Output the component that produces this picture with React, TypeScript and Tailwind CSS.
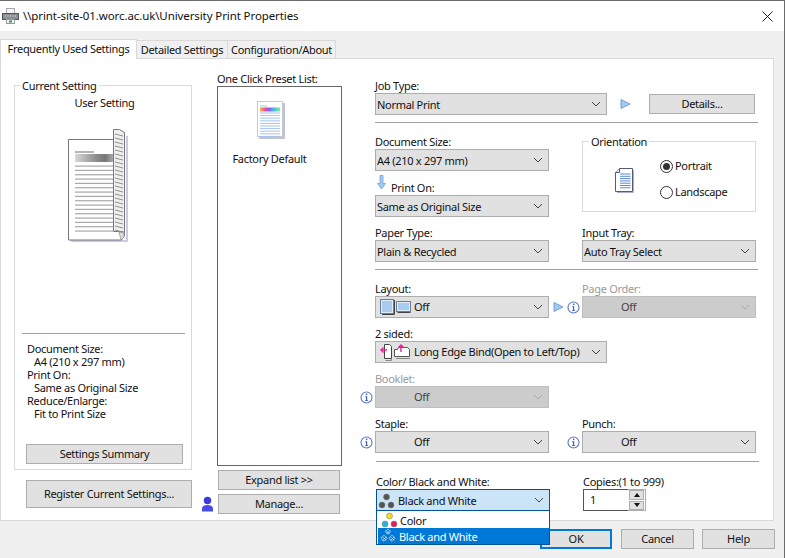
import React from 'react';

const Chevron = ({ muted }: { muted?: boolean }) => (
  <svg width="10" height="6" viewBox="0 0 10 6" className="shrink-0">
    <path d="M1 1l4 4 4-4" fill="none" stroke={muted ? '#a9a9a9' : '#444'} strokeWidth="1" />
  </svg>
);

const InfoIcon = () => (
  <svg width="13" height="13" viewBox="0 0 13 13" className="shrink-0">
    <circle cx="6.5" cy="6.5" r="5.5" fill="#fff" stroke="#5a78c8" strokeWidth="1.1" />
    <rect x="5.9" y="2.6" width="1.4" height="1.5" fill="#3f5fb8" />
    <path d="M5.2 5.3h2v3.9h1v.9H5v-.9h1V6.2h-.8z" fill="#3f5fb8" />
  </svg>
);

const BlueArrow = () => (
  <svg width="11" height="10" viewBox="0 0 11 10" className="shrink-0">
    <path d="M1 .5l9 4.500-9 4.500z" fill="#a5c8ee" stroke="#6ea2dc" strokeWidth="1" />
  </svg>
);

const LayoutIcon = () => (
  <svg width="31" height="16" viewBox="0 0 31 16" className="shrink-0">
    <rect x=".5" y=".5" width="13" height="14" fill="#a9cbee" stroke="#6c7c98" />
    <rect x="1.500" y="1.500" width="11" height="12" fill="none" stroke="#dcebf8" />
    <path d="M14.500 1v14.500H2" fill="none" stroke="#444" />
    <rect x="16.500" y="2.500" width="14" height="10" fill="#a9cbee" stroke="#6c7c98" />
    <rect x="17.500" y="3.500" width="12" height="8" fill="none" stroke="#dcebf8" />
    <path d="M17.500 13.500h13" stroke="#444" />
  </svg>
);

const TwoSidedIcon = () => (
  <svg width="31" height="18" viewBox="0 0 31 18" className="shrink-0">
    <path d="M4.500 1.500h5l2 2v12h-7z" fill="#fff" stroke="#444" />
    <path d="M11.500 15.500v2h-6" fill="none" stroke="#888" />
    <path d="M1 7h6M3.500 4.500L1 7l2.500 2.500" fill="none" stroke="#e6249a" strokeWidth="1.4" />
    <path d="M14.500 6.500h3l1-2h9l2 2v7h-15z" fill="#fff" stroke="#555" />
    <path d="M21 9V2M18.500 4.500L21 2l2.500 2.500" fill="none" stroke="#e6249a" strokeWidth="1.4" />
    <path d="M16 15.500h14" stroke="#888" />
  </svg>
);

const Balls = ({ top, left, right }: { top: string; left: string; right: string }) => (
  <svg width="17" height="16" viewBox="0 0 17 16" className="shrink-0">
    <circle cx="8.500" cy="4" r="3" fill={top} stroke="#777" strokeWidth=".5" />
    <circle cx="4" cy="12" r="3" fill={left} stroke="#777" strokeWidth=".5" />
    <circle cx="13" cy="12" r="3" fill={right} stroke="#777" strokeWidth=".5" />
  </svg>
);

const HatchBalls = () => (
  <svg width="18" height="16" viewBox="0 0 18 18" className="shrink-0">
    <g fill="none" stroke="#dfe9f5" strokeWidth=".8">
      <path d="M9 1l3 3-3 3-3-3zM4.500 8l3.500 3.500L4.500 15 1 11.500zM13.500 8l3.500 3.500-3.500 3.500-3.500-3.500z" />
      <path d="M7 3l4 4M11 3L7 7M3 10l4 4M7 10l-4 4M12 10l4 4M16 10l-4 4" />
    </g>
  </svg>
);

function Select({
  width,
  children,
  disabled,
  active,
  indent,
  icon,
}: {
  width: string;
  children: React.ReactNode;
  disabled?: boolean;
  active?: boolean;
  indent?: boolean;
  icon?: boolean;
}) {
  const tone = active
    ? 'bg-[#cce4f7] border-[#005499]'
    : disabled
      ? 'bg-[#cccccc] border-[#bfbfbf] text-[#444]'
      : 'bg-[#e1e1e1] border-[#adadad]';
  const inset = indent ? 'pl-[37px] pt-px' : icon ? 'pl-[3px]' : 'pt-[2px]';
  return (
    <div className={`${width} h-[22px] shrink-0 border flex items-center pl-[1px] pr-[5px] ${tone}`}>
      <div className={`flex-1 flex items-center gap-[3px] min-w-0 whitespace-nowrap ${inset}`}>
        {children}
      </div>
      <Chevron muted={disabled} />
    </div>
  );
}

const Label = ({ children, muted }: { children: React.ReactNode; muted?: boolean }) => (
  <div className={`h-[14px] leading-[14px] whitespace-nowrap ${muted ? 'text-[#9a9a9a]' : ''}`}>{children}</div>
);

const Btn = ({ className, children }: { className: string; children: React.ReactNode }) => (
  <div className={`border border-[#adadad] bg-[#e1e1e1] flex items-center justify-center whitespace-nowrap ${className}`}>
    {children}
  </div>
);

const Divider = ({ className }: { className: string }) => <div className={`h-px bg-[#a0a0a0] ${className}`} />;

function BigPage() {
  const lines = Array.from({ length: 16 }, (_, i) => 37.5 + i * 4.33);
  const hatch = Array.from({ length: 25 }, (_, i) => 6 + i * 4);
  return (
    <svg width="62" height="116" viewBox="0 0 62 116">
      <defs>
        <linearGradient id="band" x1="0" x2="1" y1="0" y2="0">
          <stop offset="0" stopColor="#d8d8d8" />
          <stop offset=".55" stopColor="#8e8e8e" />
          <stop offset=".8" stopColor="#777" />
          <stop offset="1" stopColor="#aaa" />
        </linearGradient>
      </defs>
      <path d="M59 8h2v106H4v-2h55z" fill="#c6cbe8" />
      <path d="M1.500 11.500h45v-9l6 0 5 3v102l-3 4.500h-53z" fill="#fff" stroke="#777" />
      <rect x="8" y="23" width="19" height="2" fill="#b5b5b5" />
      <rect x="8" y="26" width="38" height="8" fill="url(#band)" />
      {lines.map(y => (
        <rect key={y} x="8" y={y} width="38" height="1.200" fill="#a8a8a8" />
      ))}
      <path d="M46.500 1.500h6l5 3v99.500l-5-.5h-6z" fill="#efefef" stroke="#777" />
      {hatch.map(y => (
        <path key={y} d={`M48 ${y}l8 2`} stroke="#8f8f8f" strokeWidth="1" />
      ))}
      <path d="M52 104l5 1v4l-3 3z" fill="#ddd" stroke="#888" strokeWidth=".7" />
    </svg>
  );
}

function PresetIcon() {
  const lines = Array.from({ length: 10 }, (_, i) => 11.500 + i * 2.600);
  return (
    <svg width="28" height="38" viewBox="0 0 28 38">
      <defs>
        <linearGradient id="rainbow" x1="0" x2="1" y1="0" y2="0">
          <stop offset="0" stopColor="#f6b73c" />
          <stop offset=".25" stopColor="#f04fa0" />
          <stop offset=".45" stopColor="#8a5cf0" />
          <stop offset=".7" stopColor="#50b8f0" />
          <stop offset="1" stopColor="#7cf07c" />
        </linearGradient>
      </defs>
      <rect x="2" y="2" width="26" height="36" fill="#bfc4d0" />
      <rect x=".5" y=".5" width="25" height="35" fill="#fff" stroke="#c4c8d0" />
      <rect x="3" y="4.500" width="7" height="1" fill="#b8c8e8" />
      <rect x="3" y="6.500" width="20" height="4" fill="url(#rainbow)" />
      {lines.map(y => (
        <rect key={y} x="3" y={y} width="20" height="1" fill="#a8c4ee" />
      ))}
    </svg>
  );
}

function OrientationDoc() {
  const lines = Array.from({ length: 7 }, (_, i) => 6.500 + i * 2.300);
  return (
    <svg width="20" height="26" viewBox="0 0 20 26">
      <path d="M5.500 1.500h13v23H1.500V5.500z" fill="#fff" stroke="#555c78" />
      <path d="M5.500 1.500v4h-4" fill="#e8ecf8" stroke="#555c78" />
      {lines.map(y => (
        <rect key={y} x="6" y={y} width="10.500" height="1" fill="#5e8ad8" />
      ))}
      <path d="M19.500 3v22.500H3" fill="none" stroke="#aab0c8" />
    </svg>
  );
}

function PrinterIcon() {
  return (
    <svg width="17" height="16" viewBox="0 0 17 16">
      <rect x="4.500" y=".5" width="8" height="5" fill="#f4f4f4" stroke="#a8a8a8" />
      <rect x=".5" y="5.500" width="16" height="6" fill="#8a8f96" stroke="#555" />
      <path d="M3 8h1M5.500 8h1M8 8h1M10.500 8h1M13 8h1" stroke="#e8e8e8" />
      <rect x="4.500" y="11.500" width="8" height="4" fill="#f4f4f4" stroke="#999" />
      <rect x="7" y="12.500" width="3" height="2" fill="#1e9a88" />
    </svg>
  );
}

function Radio({ checked, label }: { checked?: boolean; label: string }) {
  return (
    <div className="flex items-center gap-[2px] h-[14px]">
      <div className="w-[13px] h-[13px] rounded-full border border-[#333] flex items-center justify-center bg-white">
        {checked && <div className="w-[7px] h-[7px] rounded-full bg-[#333]" />}
      </div>
      <span>{label}</span>
    </div>
  );
}

export default function App() {
  return (
    <div className="relative w-[785px] h-[558px] overflow-hidden bg-[#f0f0f0] border-t border-r border-[#6b6b6b] text-[11px] tracking-[-0.3px] text-[#111] font-['Noto_Sans',sans-serif]">
      {/* Title bar */}
      <div className="h-[30px] bg-white flex items-center pl-[2px] pr-[11px]">
        <PrinterIcon />
        <span className="ml-[4px] text-[11.5px] tracking-[-0.1px]">\\print-site-01.worc.ac.uk\University Print Properties</span>
        <svg width="11" height="11" viewBox="0 0 11 11" className="ml-auto">
          <path d="M.5.500l10 10M10.500.500l-10 10" stroke="#222" strokeWidth="1" />
        </svg>
      </div>

      {/* Tabs */}
      <div className="h-[27px] flex items-end">
        <div className="w-[137px] h-[20px] bg-white border border-b-0 border-[#d9d9d9] flex items-center justify-center -mb-px relative z-10">
          Frequently Used Settings
        </div>
        <div className="w-[91px] h-[18px] pt-px bg-[#f0f0f0] border-r border-t border-[#d9d9d9] flex items-center justify-center">Detailed Settings</div>
        <div className="w-[108px] h-[18px] pt-px bg-[#f0f0f0] border-r border-t border-[#d9d9d9] flex items-center justify-center">Configuration/About</div>
      </div>

      {/* Tab page */}
      <div className="w-[774px] h-[463px] bg-white border border-[#d9d9d9] flex pl-[13px]">
        {/* Current setting */}
        <div className="w-[178px] shrink-0 flex flex-col pt-[26px]">
          <div className="relative w-[178px] h-[385px] border border-[#d9d9d9] flex flex-col items-center">
            <div className="absolute left-[5px] -top-[7px] bg-white px-[2px] leading-[14px]">Current Setting</div>
            <div className="mt-[10px] leading-[14px] ml-[3px]">User Setting</div>
            <div className="mt-[18px] mr-[11px]"><BigPage /></div>
            <Divider className="w-[163px] mt-[89px] self-start ml-[7px]" />
            <div className="self-start ml-[12px] mt-[8px] leading-[13px] whitespace-nowrap">
              <div>Document Size:</div>
              <div className="pl-[7px]">A4 (210 x 297 mm)</div>
              <div>Print On:</div>
              <div className="pl-[7px]">Same as Original Size</div>
              <div>Reduce/Enlarge:</div>
              <div className="pl-[7px]">Fit to Print Size</div>
            </div>
            <Btn className="w-[157px] h-[20px] mt-[24px] self-start ml-[11px]">Settings Summary</Btn>
          </div>
          <Btn className="w-[166px] h-[28px] ml-[12px] mt-[10px]">Register Current Settings...</Btn>
        </div>

        {/* Preset list */}
        <div className="w-[141px] shrink-0 ml-[9px] flex flex-col pt-[13px]">
          <div className="ml-[16px]"><Label>One Click Preset List:</Label></div>
          <div className="ml-[16px] w-[125px] h-[380px] border border-[#666] flex flex-col items-center">
            <div className="mt-[14px] mr-[18px]"><PresetIcon /></div>
            <div className="mt-[13px] leading-[14px] mr-[20px]">Factory Default</div>
          </div>
          <Btn className="w-[122px] h-[20px] ml-[17px] mt-[4px]">Expand list &gt;&gt;</Btn>
          <div className="flex items-center mt-[4px]">
            <svg width="13" height="16" viewBox="0 0 13 16" className="mr-[4px] shrink-0">
              <circle cx="6.500" cy="4.500" r="3.700" fill="#3a3ae0" />
              <path d="M1 15.500v-3c0-2 2-3.500 5.500-3.500s5.500 1.500 5.500 3.500v3z" fill="#4a4ae8" />
            </svg>
            <Btn className="w-[122px] h-[20px]">Manage...</Btn>
          </div>
        </div>

        {/* Settings */}
        <div className="flex-1 flex flex-col pt-[20px] ml-[16px] relative">
          <div className="pl-[17px]">
            <Label>Job Type:</Label>
            <div className="flex items-center">
              <Select width="w-[232px]"><span>Normal Print</span></Select>
              <div className="ml-[13px]"><BlueArrow /></div>
              <Btn className="w-[106px] h-[20px] ml-[18px]">Details...</Btn>
            </div>
          </div>
          <Divider className="ml-[17px] w-[383px] mt-[7px]" />

          <div className="pl-[17px] grid grid-cols-[174px_174px] gap-x-[33px] gap-y-[9px] mt-[12px]">
            <div>
              <Label>Document Size:</Label>
              <Select width="w-[174px]"><span>A4 (210 x 297 mm)</span></Select>
              <div className="flex items-end h-[24px]">
                <svg width="9" height="15" viewBox="0 0 9 15" className="ml-[2px] mb-[5px] shrink-0">
                  <path d="M3 .5h3v8h2.500L4.500 14 .5 8.500H3z" fill="#a5c8ee" stroke="#6ea2dc" strokeWidth=".8" />
                </svg>
                <span className="ml-[5px] leading-[14px]">Print On:</span>
              </div>
              <Select width="w-[174px]"><span>Same as Original Size</span></Select>
            </div>
            <div className="pt-[6px]">
              <div className="relative w-[174px] h-[71px] border border-[#d9d9d9] flex pl-[31px] pt-[17px]">
                <div className="absolute left-[6px] -top-[7px] bg-white px-[2px] leading-[14px]">Orientation</div>
                <div className="mt-[8px]"><OrientationDoc /></div>
                <div className="ml-[26px] flex flex-col gap-[12px]">
                  <Radio checked label="Portrait" />
                  <Radio label="Landscape" />
                </div>
              </div>
            </div>
            <div>
              <Label>Paper Type:</Label>
              <Select width="w-[174px]"><span>Plain &amp; Recycled</span></Select>
            </div>
            <div>
              <Label>Input Tray:</Label>
              <Select width="w-[174px]"><span>Auto Tray Select</span></Select>
            </div>
          </div>
          <Divider className="ml-[17px] w-[383px] mt-[7px]" />

          <div className="flex flex-col gap-[9px] mt-[12px]">
            <div className="pl-[17px] flex">
              <div>
                <Label>Layout:</Label>
                <Select width="w-[174px]" icon><LayoutIcon /><span className="pt-px">Off</span></Select>
              </div>
              <div className="flex items-center gap-[3px] pt-[14px] ml-[4px] w-[29px]">
                <BlueArrow />
                <InfoIcon />
              </div>
              <div>
                <Label muted>Page Order:</Label>
                <Select width="w-[174px]" disabled indent>Off</Select>
              </div>
            </div>
            <div className="pl-[17px]">
              <Label>2 sided:</Label>
              <Select width="w-[232px]" icon><TwoSidedIcon /><span className="pt-px">Long Edge Bind(Open to Left/Top)</span></Select>
            </div>
            <div className="pl-[17px]">
              <Label muted>Booklet:</Label>
              <div className="flex items-center -ml-[15px] gap-[2px]">
                <InfoIcon />
                <Select width="w-[174px]" disabled indent>Off</Select>
              </div>
            </div>
            <div className="pl-[17px] flex">
              <div>
                <Label>Staple:</Label>
                <div className="flex items-center -ml-[15px] gap-[2px]">
                  <InfoIcon />
                  <Select width="w-[174px]" indent>Off</Select>
                </div>
              </div>
              <div className="ml-[33px]">
                <Label>Punch:</Label>
                <div className="flex items-center -ml-[15px] gap-[2px]">
                  <InfoIcon />
                  <Select width="w-[174px]" indent>Off</Select>
                </div>
              </div>
            </div>
          </div>
          <Divider className="ml-[18px] w-[383px] mt-[8px]" />

          <div className="pl-[18px] flex mt-[13px]">
            <div className="relative">
              <Label>Color/ Black and White:</Label>
              <Select width="w-[174px]" active>
                <Balls top="#555" left="#555" right="#555" />
                <span>Black and White</span>
              </Select>
              {/* Open dropdown */}
              <div className="absolute left-0 top-[36px] z-20 w-[174px] h-[34px] bg-white border border-[#005499] border-t-0 pt-px">
                <div className="h-[16px] flex items-center gap-[2px] pl-[4px]">
                  <Balls top="#f2e01c" left="#28b4e0" right="#e0205c" />
                  <span className="pt-[2px]">Color</span>
                </div>
                <div className="h-[16px] ml-px flex items-center gap-[2px] pl-[1px] bg-[#0078d7] text-white">
                  <HatchBalls />
                  <span className="pt-[2px]">Black and White</span>
                </div>
              </div>
            </div>
            <div className="ml-[33px]">
              <Label>Copies:(1 to 999)</Label>
              <div className="flex h-[22px] w-[63px] border border-[#adadad]">
                <div className="w-[45px] border border-r-0 border-[#555] -m-px mr-0 pl-[6px] leading-[20px] bg-white">1</div>
                <div className="flex-1 flex flex-col items-center justify-center gap-px px-px">
                  <div className="w-full flex-1 bg-[#e1e1e1] border border-[#adadad] flex items-center justify-center">
                    <div className="w-0 h-0 border-x-[3px] border-x-transparent border-b-[4px] border-b-[#111]" />
                  </div>
                  <div className="w-full flex-1 bg-[#e1e1e1] border border-[#adadad] flex items-center justify-center">
                    <div className="w-0 h-0 border-x-[3px] border-x-transparent border-t-[4px] border-t-[#111]" />
                  </div>
                </div>
              </div>
            </div>
          </div>
        </div>
      </div>

      {/* Dialog buttons */}
      <div className="flex justify-end pr-[9px] pt-[8px]">
        <div className="w-[72px] h-[20px] border-2 border-[#0078d7] bg-[#e1e1e1] flex items-center justify-center mr-[9px]">OK</div>
        <Btn className="w-[73px] h-[20px] mr-[8px]">Cancel</Btn>
        <Btn className="w-[73px] h-[20px]">Help</Btn>
      </div>
    </div>
  );
}
